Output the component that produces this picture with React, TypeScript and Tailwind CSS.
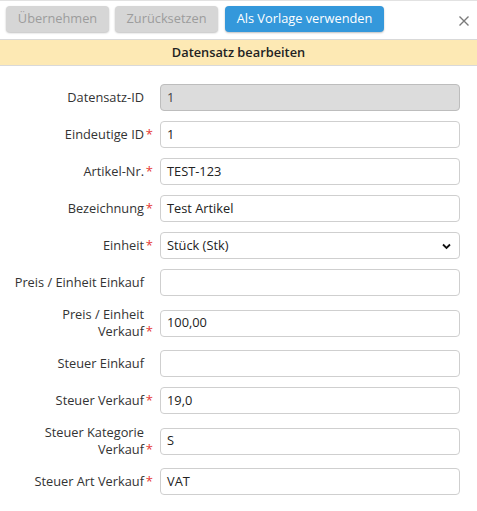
import React from "react";

type Field = {
  label: string;
  value: string;
  required?: boolean;
  disabled?: boolean;
  select?: boolean;
  twoLine?: boolean;
};

const fields: Field[] = [
  { label: "Datensatz-ID", value: "1", disabled: true },
  { label: "Eindeutige ID", value: "1", required: true },
  { label: "Artikel-Nr.", value: "TEST-123", required: true },
  { label: "Bezeichnung", value: "Test Artikel", required: true },
  { label: "Einheit", value: "Stück (Stk)", required: true, select: true },
  { label: "Preis / Einheit Einkauf", value: "" },
  { label: "Preis / Einheit Verkauf", value: "100,00", required: true, twoLine: true },
  { label: "Steuer Einkauf", value: "" },
  { label: "Steuer Verkauf", value: "19,0", required: true },
  { label: "Steuer Kategorie Verkauf", value: "S", required: true, twoLine: true },
  { label: "Steuer Art Verkauf", value: "VAT", required: true },
];

function Row({ f }: { f: Field }) {
  return (
    <div className="grid grid-cols-[160px_300px] items-center">
      <div className="relative pr-[16px] text-right text-[12.8px] leading-[17px] text-[#333]">
        {f.twoLine ? (
          <div className="pl-[20px]">{f.label}</div>
        ) : (
          <div className="whitespace-nowrap">{f.label}</div>
        )}
        {f.required && (
          <span className="absolute bottom-0 right-[7px] text-[13px] leading-[17px] text-[#e53935]">*</span>
        )}
      </div>
      {f.select ? (
        <div className="relative h-[27px] rounded-[4px] border border-[#cfcfcf] bg-white">
          <div className="flex h-full items-center pl-[6px] text-[12.8px] text-[#222]">{f.value}</div>
          <svg
            className="absolute right-[8px] top-[10px]"
            width="9"
            height="7"
            viewBox="0 0 9 7"
            fill="none"
          >
            <path d="M1 1.5 L4.5 5 L8 1.5" stroke="#111" strokeWidth="1.8" />
          </svg>
        </div>
      ) : (
        <div
          className={
            f.disabled
              ? "flex h-[27px] items-center rounded-[4px] border border-[#bdbdbd] bg-[#dcdcdc] pl-[6px] text-[12.8px] text-[#444]"
              : "flex h-[27px] items-center rounded-[4px] border border-[#cfcfcf] bg-white pl-[6px] text-[12.8px] text-[#222]"
          }
        >
          {f.value}
        </div>
      )}
    </div>
  );
}

export default function App() {
  return (
    <div
      className="h-[511px] w-[477px] overflow-hidden bg-white"
      style={{ fontFamily: '"Open Sans", "Liberation Sans", sans-serif' }}
    >
      <div className="flex h-[39px] items-start border-t border-[#e2e2e2] pl-[6px] pt-[5px]">
        <button className="h-[26px] w-[103px] rounded-[4px] bg-[#d6d6d6] text-[12.8px] text-[#9c9c9c] shadow-[0_1px_2px_rgba(0,0,0,0.25)]">
          Übernehmen
        </button>
        <button className="ml-[6px] h-[26px] w-[103px] rounded-[4px] bg-[#d6d6d6] text-[12.8px] text-[#9c9c9c] shadow-[0_1px_2px_rgba(0,0,0,0.25)]">
          Zurücksetzen
        </button>
        <button className="ml-[7px] h-[26px] w-[159px] rounded-[4px] bg-[#3498db] text-[12.8px] text-white shadow-[0_1px_2px_rgba(0,0,0,0.25)]">
          Als Vorlage verwenden
        </button>
        <div className="ml-auto mr-[8px] mt-[10px]">
          <svg width="10" height="10" viewBox="0 0 10 10" fill="none">
            <path d="M0.5 0.5 L9.5 9.5 M9.5 0.5 L0.5 9.5" stroke="#7a7a7a" strokeWidth="1.4" />
          </svg>
        </div>
      </div>
      <div className="flex h-[27px] items-center justify-center border-y border-[#d9d9d9] bg-[#fde9b4] text-[12.8px] font-semibold text-[#222]">
        Datensatz bearbeiten
      </div>
      <div className="flex flex-col gap-[10px] pt-[18px]">
        {fields.map((f) => (
          <Row key={f.label} f={f} />
        ))}
      </div>
    </div>
  );
}
